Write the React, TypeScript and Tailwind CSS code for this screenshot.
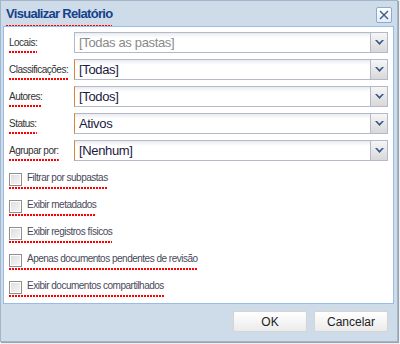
import type { ReactNode } from 'react'

const fields = [
  { label: 'Locais:', value: '[Todas as pastas]', muted: true },
  { label: 'Classificações:', value: '[Todas]' },
  { label: 'Autores:', value: '[Todos]' },
  { label: 'Status:', value: 'Ativos' },
  { label: 'Agrupar por:', value: '[Nenhum]' },
]

const options = [
  'Filtrar por subpastas',
  'Exibir metadados',
  'Exibir registros físicos',
  'Apenas documentos pendentes de revisão',
  'Exibir documentos compartilhados',
]

function Squiggle({ children, className = '' }: { children: ReactNode; className?: string }) {
  return (
    <span
      className={`inline-flex items-center bg-[repeating-linear-gradient(90deg,#ff0000_0_2px,transparent_2px_3px)] bg-[length:100%_2px] bg-bottom bg-no-repeat pb-[3px] ${className}`}
    >
      {children}
    </span>
  )
}

function Chevron() {
  return (
    <svg width="9" height="6" viewBox="0 0 9 6" aria-hidden>
      <path d="M0 0h2l2.5 2.5L7 0h2L4.5 5z" fill="#34548a" />
    </svg>
  )
}

function Combo({ value, muted }: { value: string; muted?: boolean }) {
  return (
    <div
      className={`flex h-[21px] flex-1 border border-[#b5b8c8] bg-[linear-gradient(#e9ecef,#ffffff_5px)] ${
        muted ? '' : 'border-l-[#d9843b]'
      }`}
    >
      <span
        className={`flex flex-1 items-center pl-1 text-[13px] leading-none tracking-[-0.35px] ${
          muted ? 'text-[#8a8a8a]' : 'text-[#1a1a40]'
        }`}
      >
        {value}
      </span>
      <span className="flex w-[17px] items-center justify-center border-l border-[#b5b8c8] bg-[linear-gradient(#f6f6f6,#d8d8d8)]">
        <Chevron />
      </span>
    </div>
  )
}

export default function App() {
  return (
    <div className="h-[344px] w-[400px] bg-white font-['Liberation_Sans',Arial,sans-serif]">
      <div className="flex h-[342px] w-[398px] flex-col border border-[#a3b5cb] bg-[#cedbe8] shadow-[1px_1px_1px_#9aa4ae]">
        <div className="flex h-[25px] items-center justify-between pl-[5px] pr-[5px]">
          <Squiggle className="pb-[2px] pt-[4px]">
            <span className="text-[13px] font-bold tracking-[-0.7px] text-[#15428b]">Visualizar Relatório</span>
          </Squiggle>
          <button
            type="button"
            className="mt-[2px] grid size-[16px] place-items-center rounded-[2px] border border-[#8eaad0] bg-[linear-gradient(#ffffff,#e3ecf7)]"
          >
            <svg width="10" height="10" viewBox="0 0 10 10" aria-hidden>
              <path d="M1 1l8 8M9 1l-8 8" stroke="#3a5a8c" strokeWidth="1.4" />
            </svg>
          </button>
        </div>

        <div className="ml-[2px] mr-[3px] flex flex-col border border-[#99bbe8] bg-white px-[5px] pt-[5px]">
          <div className="flex flex-col gap-[6px]">
            {fields.map((f) => (
              <div key={f.label} className="flex items-center">
                <div className="w-[65px] whitespace-nowrap text-[10px] tracking-[-0.5px] text-[#333]">
                  <Squiggle className="mt-[3px]">{f.label}</Squiggle>
                </div>
                <Combo value={f.value} muted={f.muted} />
              </div>
            ))}
          </div>

          <div className="mt-[4px] flex flex-col pb-[3px]">
            {options.map((o) => (
              <div key={o} className="flex h-[27px] items-center">
                <Squiggle className="mt-[4px] gap-[5px] text-[10px] tracking-[-0.5px] text-[#4a4a5a]">
                  <span className="size-[13px] border border-[#8f8f8f] bg-[linear-gradient(135deg,#dcdcdc,#f8f8f8)] shadow-[inset_0_0_0_1px_#fff]" />
                  <span className="-mt-[3px]">{o}</span>
                </Squiggle>
              </div>
            ))}
          </div>
        </div>

        <div className="flex justify-end gap-[7px] pr-[9px] pt-[7px]">
          <button
            type="button"
            className="h-[21px] w-[74px] rounded-[2px] border border-[#d4d4d4] bg-[linear-gradient(#ffffff,#ebebeb)] text-[12px] text-[#222]"
          >
            OK
          </button>
          <button
            type="button"
            className="h-[21px] w-[74px] rounded-[2px] border border-[#d4d4d4] bg-[linear-gradient(#ffffff,#ebebeb)] text-[12px] text-[#222]"
          >
            Cancelar
          </button>
        </div>
      </div>
    </div>
  )
}
